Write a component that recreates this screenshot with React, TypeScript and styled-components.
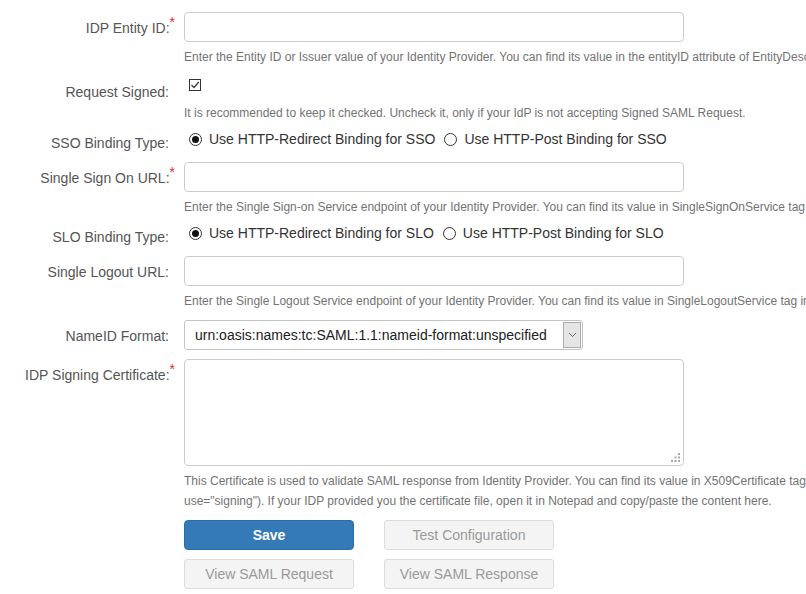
import React, { FC, ReactNode } from 'react';
import styled, { createGlobalStyle } from 'styled-components';

const GlobalStyle = createGlobalStyle`
  html, body {
    margin: 0;
    padding: 0;
    background: #ffffff;
    overflow: hidden;
  }
  body {
    font-family: 'Liberation Sans', Arial, sans-serif;
  }
`;

type FieldProps = {
  label: string;
  required?: boolean;
  radio?: boolean;
  children: ReactNode;
};

const Field: FC<FieldProps> = ({ label, required, radio, children }) => (
  <Row $radio={radio}>
    <Label $radio={radio}>
      {label}
      {required && <Star>*</Star>}
    </Label>
    <Control>{children}</Control>
  </Row>
);

const RadioChoice: FC<{ checked?: boolean; children: ReactNode }> = ({ checked, children }) => (
  <RadioOption>
    <RadioCircle $checked={checked} />
    {children}
  </RadioOption>
);

export default function App() {
  return (
    <>
      <GlobalStyle />
      <Form>
        <Field label='IDP Entity ID:' required>
          <TextInput />
          <Help>
            Enter the Entity ID or Issuer value of your Identity Provider. You can find its value in the
            entityID attribute of EntityDescriptor tag in IdP-Metadata XML file.
          </Help>
        </Field>

        <Field label='Request Signed:'>
          <CheckWrap>
            <CheckBox>
              <svg width='10' height='10' viewBox='0 0 10 10'>
                <path d='M1.5 5 L4 7.5 L8.8 2' fill='none' stroke='#333' strokeWidth='1.2' />
              </svg>
            </CheckBox>
          </CheckWrap>
          <Help $flush>
            It is recommended to keep it checked. Uncheck it, only if your IdP is not accepting Signed SAML
            Request.
          </Help>
        </Field>

        <Field label='SSO Binding Type:' radio>
          <RadioGroup>
            <RadioChoice checked>Use HTTP-Redirect Binding for SSO</RadioChoice>
            <RadioChoice>Use HTTP-Post Binding for SSO</RadioChoice>
          </RadioGroup>
        </Field>

        <Field label='Single Sign On URL:' required>
          <TextInput />
          <Help>
            Enter the Single Sign-on Service endpoint of your Identity Provider. You can find its value in
            SingleSignOnService tag (HTTP-Redirect binding) in IdP-Metadata XML file.
          </Help>
        </Field>

        <Field label='SLO Binding Type:' radio>
          <RadioGroup>
            <RadioChoice checked>Use HTTP-Redirect Binding for SLO</RadioChoice>
            <RadioChoice>Use HTTP-Post Binding for SLO</RadioChoice>
          </RadioGroup>
        </Field>

        <Field label='Single Logout URL:'>
          <TextInput />
          <Help>
            Enter the Single Logout Service endpoint of your Identity Provider. You can find its value in
            SingleLogoutService tag in IdP-Metadata XML file.
          </Help>
        </Field>

        <Field label='NameID Format:'>
          <SelectBox>
            <SelectText>urn:oasis:names:tc:SAML:1.1:nameid-format:unspecified</SelectText>
            <SelectArrow>
              <svg width='9' height='6' viewBox='0 0 9 6'>
                <path d='M1 1 L4.5 4.5 L8 1' fill='none' stroke='#666' strokeWidth='1' />
              </svg>
            </SelectArrow>
          </SelectBox>
        </Field>

        <Field label='IDP Signing Certificate:' required>
          <AreaWrap>
            <TextArea />
            <Grip width='9' height='9' viewBox='0 0 9 9'>
              <rect x='7' y='0' width='2' height='2' />
              <rect x='3.5' y='3.5' width='2' height='2' />
              <rect x='7' y='3.5' width='2' height='2' />
              <rect x='0' y='7' width='2' height='2' />
              <rect x='3.5' y='7' width='2' height='2' />
              <rect x='7' y='7' width='2' height='2' />
            </Grip>
          </AreaWrap>
          <Help>
            This Certificate is used to validate SAML response from Identity Provider. You can find its value
            in X509Certificate tag (having attribute
            <br />
            use="signing"). If your IDP provided you the certificate file, open it in Notepad and copy/paste
            the content here.
          </Help>
          <Buttons>
            <Button $primary>Save</Button>
            <Button>Test Configuration</Button>
            <Button>View SAML Request</Button>
            <Button>View SAML Response</Button>
          </Buttons>
        </Field>
      </Form>
    </>
  );
}

const Form = styled.div`
  width: 1200px;
  padding-top: 12px;
`;

const Row = styled.div<{ $radio?: boolean }>`
  display: grid;
  grid-template-columns: 169px 1fr;
  column-gap: 15px;
  margin: ${(p) => (p.$radio ? '-3px 0 9px' : '0 0 9px')};
`;

const Label = styled.div<{ $radio?: boolean }>`
  padding-top: ${(p) => (p.$radio ? '4px' : '6px')};
  font-size: 14px;
  line-height: 20px;
  color: #555555;
  text-align: right;
  white-space: nowrap;
`;

const Star = styled.span`
  display: inline-block;
  margin-right: -6px;
  color: #d9302c;
  font-size: 14px;
  line-height: 0;
  vertical-align: 6px;
`;

const Control = styled.div`
  min-width: 0;
`;

const TextInput = styled.div`
  box-sizing: border-box;
  width: 500px;
  height: 30px;
  border: 1px solid #cccccc;
  border-radius: 4px;
  background: #ffffff;
`;

const Help = styled.div<{ $flush?: boolean }>`
  margin-top: ${(p) => (p.$flush ? '0' : '5px')};
  font-size: 12px;
  line-height: 20px;
  color: #737373;
  white-space: nowrap;
`;

const CheckWrap = styled.div`
  box-sizing: border-box;
  height: 27px;
  padding: 3px 0 0 5px;
`;

const CheckBox = styled.span`
  box-sizing: border-box;
  display: flex;
  align-items: center;
  justify-content: center;
  width: 12px;
  height: 12px;
  border: 1px solid #333333;
  background: #ffffff;
`;

const RadioGroup = styled.div`
  display: flex;
  align-items: center;
  gap: 9px;
  height: 20px;
  padding-left: 5px;
`;

const RadioOption = styled.label`
  display: flex;
  align-items: center;
  font-size: 14px;
  line-height: 20px;
  color: #333333;
  white-space: nowrap;
`;

const RadioCircle = styled.span<{ $checked?: boolean }>`
  box-sizing: border-box;
  display: flex;
  align-items: center;
  justify-content: center;
  width: 13px;
  height: 13px;
  margin-right: 7px;
  border: 1px solid #333333;
  border-radius: 50%;
  background: #ffffff;
  &::after {
    content: '';
    display: ${(p) => (p.$checked ? 'block' : 'none')};
    width: 7px;
    height: 7px;
    border-radius: 50%;
    background: #111111;
  }
`;

const SelectBox = styled.div`
  box-sizing: border-box;
  display: flex;
  align-items: stretch;
  width: 399px;
  height: 30px;
  padding: 1px;
  border: 1px solid #c4c4c4;
  border-radius: 3px;
  background: #ffffff;
`;

const SelectText = styled.span`
  flex: 1;
  padding-left: 9px;
  font-size: 14px;
  line-height: 26px;
  color: #222222;
  white-space: nowrap;
`;

const SelectArrow = styled.span`
  display: flex;
  align-items: center;
  justify-content: center;
  width: 16px;
  border: 1px solid #acacac;
  background: #e5e5e5;
`;

const AreaWrap = styled.div`
  position: relative;
  width: 500px;
  height: 107px;
`;

const TextArea = styled.textarea`
  box-sizing: border-box;
  display: block;
  width: 500px;
  height: 107px;
  margin: 0;
  border: 1px solid #cccccc;
  border-radius: 4px;
  resize: none;
  outline: none;
`;

const Grip = styled.svg`
  position: absolute;
  right: 4px;
  bottom: 4px;
  fill: #a8a8a8;
`;

const Buttons = styled.div`
  display: grid;
  grid-template-columns: 170px 170px;
  column-gap: 30px;
  row-gap: 9px;
  margin-top: 9px;
`;

const Button = styled.button<{ $primary?: boolean }>`
  box-sizing: border-box;
  height: 30px;
  padding: 0;
  border: 1px solid ${(p) => (p.$primary ? '#2e6da4' : '#dcdcdc')};
  border-radius: ${(p) => (p.$primary ? '4px' : '3px')};
  background: ${(p) => (p.$primary ? '#337ab7' : '#f4f4f4')};
  color: ${(p) => (p.$primary ? '#ffffff' : '#9a9a9a')};
  font-family: 'Liberation Sans', Arial, sans-serif;
  font-size: 14px;
  font-weight: ${(p) => (p.$primary ? 'bold' : 'normal')};
  cursor: pointer;
`;
